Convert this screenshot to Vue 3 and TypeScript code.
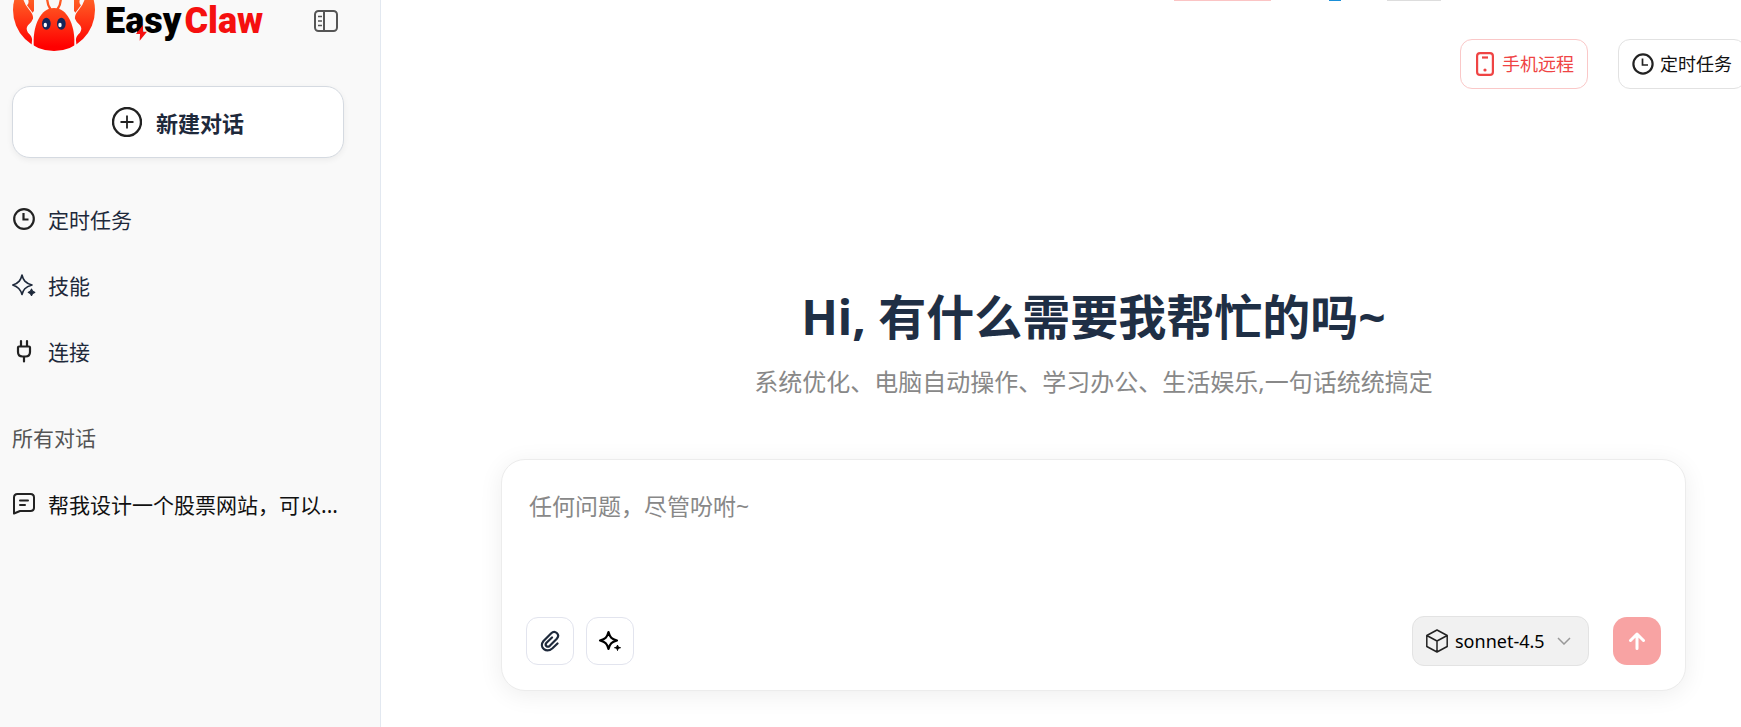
<script setup lang="ts">
import { ref } from 'vue'

interface NavItem {
  label: string
  icon: 'clock' | 'sparkle' | 'plug'
}

const navItems: NavItem[] = [
  { label: '定时任务', icon: 'clock' },
  { label: '技能', icon: 'sparkle' },
  { label: '连接', icon: 'plug' },
]

const chats: string[] = ['帮我设计一个股票网站，可以...']
const models: string[] = ['sonnet-4.5']

const model = ref<string>('sonnet-4.5')
const prompt = ref<string>('')
</script>

<template>
  <div class="app">
    <aside class="sidebar">
      <div class="brand">
        <svg class="mascot" viewBox="39 0 246 156" aria-hidden="true">
          <defs>
            <linearGradient id="shell" gradientUnits="userSpaceOnUse" x1="0" y1="-90" x2="0" y2="140">
              <stop offset="0" stop-color="#ff9a3c" />
              <stop offset="1" stop-color="#ff0000" />
            </linearGradient>
            <clipPath id="disc"><circle cx="162" cy="30" r="123" /></clipPath>
          </defs>
          <g clip-path="url(#disc)" fill="url(#shell)">
            <path d="M30 -10H68Q72 12 88 30Q101 45 99 56Q96 65 84 76Q76 86 84 98Q98 110 96 122L94 140L30 140Z" />
            <path d="M82 -6H102V32L98 38Q88 26 81 16Q90 8 82 -6Z" />
            <path d="M294 -10H256Q252 12 236 30Q223 45 225 56Q228 65 240 76Q248 86 240 98Q226 110 228 122L230 140L294 140Z" />
            <path d="M242 -6H222V32L226 38Q236 26 243 16Q234 8 242 -6Z" />
            <path d="M101 160V118C102 78 120 24 162 24S222 78 223 118V160Z" />
            <path d="M138 -2H145Q146 16 155 26L148 29Q139 16 138 -2ZM186 -2H179Q178 16 169 26L176 29Q185 16 186 -2Z" />
          </g>
          <ellipse cx="139" cy="71" rx="13" ry="18" fill="#14265a" />
          <ellipse cx="184" cy="71" rx="13" ry="18" fill="#14265a" />
          <ellipse cx="136" cy="75" rx="5" ry="7" fill="#fff" />
          <ellipse cx="180" cy="75" rx="5" ry="7" fill="#fff" />
        </svg>
        <div class="wordmark">
          <span>Easy</span><span class="accent">Claw</span>
          <svg class="bolt" viewBox="0 0 33 48" aria-hidden="true">
            <path d="M21 0L0 27H12L11 47L33 20H21Z" fill="#f5100f" />
          </svg>
        </div>
        <button class="toggle" type="button" aria-label="收起侧边栏">
          <svg viewBox="0 0 24 22" fill="none" stroke="#555" stroke-width="2">
            <rect x="1" y="1" width="22" height="20" rx="3.5" />
            <path d="M10 1V21" />
            <path d="M4 6.5H8M4 11H8M4 15.500H8" stroke-width="1.500" />
          </svg>
        </button>
      </div>

      <button class="new-chat" type="button">
        <svg viewBox="0 0 30 30" fill="none" stroke="#222">
          <circle cx="15" cy="15" r="14" stroke-width="2.400" />
          <path d="M15 8.500V21.500M8.500 15H21.500" stroke-width="1.800" />
        </svg>
        <span>新建对话</span>
      </button>

      <nav class="nav">
        <a v-for="item in navItems" :key="item.label" class="row" href="#">
          <svg v-if="item.icon === 'clock'" viewBox="0 0 24 24" fill="none" stroke="#222" stroke-width="2.200">
            <circle cx="12" cy="12" r="9.800" />
            <path d="M11.500 6V12.500H16.500" />
          </svg>
          <svg v-else-if="item.icon === 'sparkle'" viewBox="0 0 24 24" fill="none" stroke="#1e293b" stroke-width="1.600" stroke-linejoin="round">
            <path d="M10 2C11.200 7 13 10 20 12C13 14 11.200 17 10 21.500C8.800 17 7 14 0.800 12C7 10 8.800 7 10 2Z" />
            <path d="M19.500 16.200C20 18.200 20.500 18.800 22.800 19.300C20.500 19.800 20 20.400 19.500 22.500C19 20.400 18.500 19.800 16.300 19.300C18.500 18.800 19 18.200 19.500 16.200Z" fill="#1e293b" stroke-width="1.200" />
          </svg>
          <svg v-else viewBox="0 0 24 24" fill="none" stroke="#222" stroke-width="2.200" stroke-linecap="round" stroke-linejoin="round">
            <path d="M9 2V7M15 2V7M12 18V22.500" />
            <path d="M7 7.500H17Q18 7.500 18 8.500V13Q18 17.500 13.500 17.500H10.500Q6 17.500 6 13V8.500Q6 7.500 7 7.500Z" />
          </svg>
          <span>{{ item.label }}</span>
        </a>
      </nav>

      <h2 class="section">所有对话</h2>
      <a v-for="chat in chats" :key="chat" class="row chat" href="#">
        <svg viewBox="0 0 24 24" fill="none" stroke="#222" stroke-width="2" stroke-linecap="round" stroke-linejoin="round">
          <path d="M5.500 2H18.500Q22 2 22 5.500V15.500Q22 19 18.500 19H8L2 21.500V5.500Q2 2 5.500 2Z" />
          <path d="M8 8.500H16M8 13H13" />
        </svg>
        <span>{{ chat }}</span>
      </a>
    </aside>

    <main class="main">
      <div class="edge" aria-hidden="true">
        <i class="edge-red"></i>
        <i class="edge-blue"></i>
        <i class="edge-gray"></i>
      </div>

      <header class="topbar">
        <button class="pill pill-red" type="button">
          <svg viewBox="0 0 18 24" fill="none" stroke="#ef4444" stroke-width="2.200">
            <rect x="1.100" y="1.100" width="15.800" height="21.800" rx="3" />
            <path d="M6 5.500H12" />
            <circle cx="9" cy="18" r="1.600" fill="#ef4444" stroke="none" />
          </svg>
          <span>手机远程</span>
        </button>
        <button class="pill" type="button">
          <svg class="clock" viewBox="0 0 22 22" fill="none" stroke="#222" stroke-width="2.200">
            <circle cx="11" cy="11" r="9.600" />
            <path d="M10.500 5.500V12H16" stroke-width="1.700" />
          </svg>
          <span>定时任务</span>
        </button>
      </header>

      <section class="hero">
        <h1>Hi, 有什么需要我帮忙的吗~</h1>
        <p>系统优化、电脑自动操作、学习办公、生活娱乐,一句话统统搞定</p>

        <form class="composer" @submit.prevent>
          <textarea v-model="prompt" aria-label="输入问题" placeholder="任何问题，尽管吩咐~"></textarea>
          <div class="actions">
            <button class="tool" type="button" aria-label="添加附件">
              <svg viewBox="0 0 24 24" fill="none" stroke="#1e293b" stroke-width="2.200" stroke-linecap="round" stroke-linejoin="round">
                <path d="M19.500 14.500L14.500 19.200C8.500 24.500 0.500 18.500 5.500 12L13 4.500C17 0.500 22.500 5.500 18.800 9.800L11.800 16.800C9.300 19 6.300 16.500 8.500 13.800L14 8.500" />
              </svg>
            </button>
            <button class="tool" type="button" aria-label="技能">
              <svg viewBox="0 0 24 24" fill="none" stroke="#000" stroke-width="2.200" stroke-linejoin="round">
                <path d="M10.500 3C12 8.500 13.500 10 19 11.500C13.500 13 12 14.500 10.500 20C9 14.500 7.500 13 2 11.500C7.500 10 9 8.500 10.500 3Z" />
                <path d="M19.500 16C20 18 20.500 18.200 22.500 18.700C20.500 19.200 20 19.500 19.500 21.500C19 19.500 18.500 19.200 16.500 18.700C18.500 18.200 19 18 19.500 16Z" fill="#000" stroke-width="1" />
              </svg>
            </button>
            <div class="model">
              <svg class="cube" viewBox="0 0 24 24" fill="none" stroke="#222" stroke-width="1.500" stroke-linejoin="round">
                <path d="M12 1L22.200 6.500V17.500L12 23L1.800 17.500V6.500ZM1.800 6.500L12 12L22.200 6.500M12 12V23" />
              </svg>
              <select v-model="model" aria-label="模型">
                <option v-for="m in models" :key="m" :value="m">{{ m }}</option>
              </select>
              <svg class="chevron" viewBox="0 0 14 8" fill="none" stroke="#999" stroke-width="1.500">
                <path d="M1 1L7 7L13 1" />
              </svg>
            </div>
            <button class="send" type="submit" aria-label="发送">
              <svg viewBox="0 0 18 18" fill="none" stroke="#fff" stroke-width="3" stroke-linecap="round" stroke-linejoin="round">
                <path d="M9 16.500V2M2.500 8.500L9 2L15.500 8.500" />
              </svg>
            </button>
          </div>
        </form>
      </section>
    </main>
  </div>
</template>

<style>
body {
  margin: 0;
  overflow: hidden;
}
</style>

<style scoped>
.app {
  display: flex;
  min-height: 100vh;
  overflow: hidden;
  background: #fff;
  font-family: "Noto Sans", "Noto Sans CJK SC", sans-serif;
  color: #1e293b;
}

.app * {
  box-sizing: border-box;
}

svg {
  display: block;
  flex: none;
}

button,
textarea,
select {
  margin: 0;
  padding: 0;
  border: 0;
  background: none;
  font-family: inherit;
  color: inherit;
}

/* Sidebar */
.sidebar {
  flex: none;
  width: 381px;
  padding: 0 36px 0 12px;
  background: #f9f9f9;
  border-right: 1px solid #e2e8f0;
}

.brand {
  display: flex;
  align-items: flex-start;
  height: 52px;
}

.mascot {
  width: 82px;
  height: 52px;
  margin-left: 1px;
}

.wordmark {
  position: relative;
  margin-left: 10px;
  font-family: Roboto, sans-serif;
  font-size: 36px;
  font-weight: 900;
  line-height: 42px;
  color: #000;
}

.accent {
  margin-left: 3px;
  color: #f5100f;
}

.bolt {
  position: absolute;
  left: 31px;
  top: 25px;
  width: 11px;
  height: 16px;
}

.toggle {
  margin: 10px 6px 0 auto;
}

.toggle svg {
  width: 24px;
  height: 22px;
}

.new-chat {
  display: flex;
  align-items: center;
  justify-content: center;
  gap: 14px;
  width: 100%;
  height: 72px;
  margin-top: 34px;
  border: 1px solid #d5dae1;
  border-radius: 18px;
  background: #fff;
  box-shadow: 0 2px 6px rgba(0, 0, 0, 0.06);
  font-size: 22px;
  font-weight: 700;
}

.new-chat svg {
  width: 30px;
  height: 30px;
}

.nav {
  margin-top: 28px;
}

.row {
  display: flex;
  align-items: center;
  gap: 12px;
  height: 66px;
  font-size: 21px;
  color: #1e293b;
  text-decoration: none;
  white-space: nowrap;
}

.row svg {
  width: 24px;
  height: 24px;
}

.chat {
  color: #111;
}

.section {
  height: 66px;
  margin: 21px 0 0;
  font-size: 21px;
  font-weight: 400;
  line-height: 66px;
  color: #555;
}

/* Main column */
.main {
  display: flex;
  flex: 1;
  flex-direction: column;
  min-width: 0;
}

.edge {
  display: flex;
  justify-content: flex-end;
  height: 1px;
  padding-right: 300px;
}

.edge-red {
  width: 97px;
  background: #fbc4c4;
}

.edge-blue {
  width: 12px;
  margin: 0 46px 0 58px;
  background: #1a8fd8;
}

.edge-gray {
  width: 54px;
  background: #ddd;
}

.topbar {
  display: flex;
  justify-content: flex-end;
  gap: 30px;
  margin: 38px -5px 0 0;
}

.pill {
  display: flex;
  flex: none;
  align-items: center;
  gap: 6px;
  width: 128px;
  height: 50px;
  padding-left: 13px;
  border: 1px solid #e2e2e2;
  border-radius: 12px;
  background: #fff;
  font-size: 18px;
  line-height: 24px;
  white-space: nowrap;
  color: #111;
}

.pill svg {
  width: 18px;
  height: 24px;
}

.pill .clock {
  width: 22px;
  height: 22px;
}

.pill-red {
  gap: 8px;
  padding-left: 15px;
  border-color: #fac8c8;
  color: #ef4444;
}

.hero {
  padding: 192px 55px 0 120px;
  text-align: center;
}

.hero h1 {
  margin: 0;
  font-size: 48px;
  font-weight: 700;
  line-height: 72px;
  color: #1f2f45;
  white-space: nowrap;
}

.hero p {
  margin: 11px 0 0;
  font-size: 24px;
  line-height: 36px;
  color: #888;
  white-space: nowrap;
}

.composer {
  margin-top: 59px;
  padding: 24px;
  border: 1px solid #ececec;
  border-radius: 24px;
  background: #fff;
  box-shadow: 0 4px 24px rgba(0, 0, 0, 0.07);
}

.composer textarea {
  display: block;
  width: 100%;
  height: 132px;
  padding: 4px 3px;
  resize: none;
  outline: none;
  font-size: 23px;
  line-height: 36px;
}

.composer textarea::placeholder {
  color: #888;
  opacity: 1;
}

.actions {
  display: flex;
  align-items: center;
  gap: 12px;
}

.tool {
  display: grid;
  place-items: center;
  width: 48px;
  height: 48px;
  border: 1px solid #e2e4ee;
  border-radius: 12px;
}

.tool svg {
  width: 24px;
  height: 24px;
}

.model {
  display: flex;
  align-items: center;
  height: 50px;
  margin-left: auto;
  padding: 0 17px 0 12px;
  border: 1px solid #e3e3e3;
  border-radius: 12px;
  background: #f1f1f1;
}

.cube {
  width: 24px;
  height: 24px;
}

.model select {
  margin: 0 12px 0 6px;
  appearance: none;
  outline: none;
  font-size: 18px;
  line-height: 26px;
  color: #000;
}

.chevron {
  width: 14px;
  height: 8px;
}

.send {
  display: grid;
  place-items: center;
  width: 48px;
  height: 48px;
  margin-left: 12px;
  border-radius: 14px;
  background: #f8a3a3;
}

.send svg {
  width: 18px;
  height: 18px;
}
</style>
